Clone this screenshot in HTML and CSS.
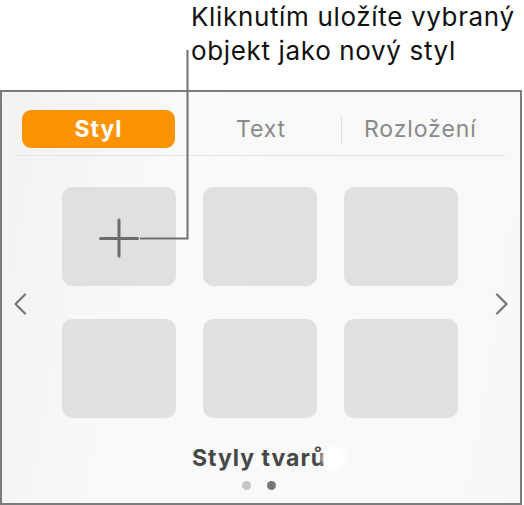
FILE: index.html
```html
<!DOCTYPE html>
<html lang="cs">
<head>
    <meta charset="UTF-8">
    <title>Styly tvarů</title>
    <link rel="stylesheet" href="styles.css">
</head>
<body>
    <div class="figure">
        <p class="callout">Kliknutím uložíte vybraný<br>objekt jako nový styl</p>

        <div class="panel">
            <div class="tabs">
                <div class="tab active"><span>Styl</span></div>
                <div class="tab">Text</div>
                <div class="tab divided">Rozložení</div>
            </div>
            <div class="rule"></div>

            <div class="browser">
                <svg class="chevron" width="14" height="22" viewBox="0 0 14 22">
                    <polyline points="12,1.5 2.5,11 12,20.5" fill="none" stroke="#767676" stroke-width="2.2" stroke-linecap="round" stroke-linejoin="round"/>
                </svg>
                <div class="tiles">
                    <div class="tile add">
                        <svg width="40" height="40" viewBox="0 0 40 40">
                            <path d="M1.5 20.5 H38.5 M20 2 V38" stroke="#6c6c6c" stroke-width="3" stroke-linecap="round"/>
                        </svg>
                    </div>
                    <div class="tile"></div>
                    <div class="tile"></div>
                    <div class="tile"></div>
                    <div class="tile"></div>
                    <div class="tile"></div>
                </div>
                <svg class="chevron right" width="14" height="22" viewBox="0 0 14 22">
                    <polyline points="2,1.5 11.5,11 2,20.5" fill="none" stroke="#767676" stroke-width="2.2" stroke-linecap="round" stroke-linejoin="round"/>
                </svg>
            </div>

            <div class="caption"><span class="caption-text">Styly tvarů</span><span class="glow"></span></div>
            <div class="dots">
                <span class="dot"></span>
                <span class="dot current"></span>
            </div>
        </div>

        <!-- leader line from the callout to the + tile -->
        <svg class="leader" width="524" height="505" viewBox="0 0 524 505">
            <polyline points="187.5,50 187.5,238.5 140,238.5" fill="none" stroke="#707070" stroke-width="2"/>
        </svg>
    </div>
</body>
</html>
```

FILE: styles.css
```css
body, html {
    margin: 0;
    padding: 0;
    background: #ffffff;
    font-family: Inter, Roboto, 'Liberation Sans', sans-serif;
}

.figure {
    position: relative;
    width: 524px;
    height: 505px;
    overflow: hidden;
}

.callout {
    margin: 0;
    padding-left: 191px;
    font-size: 26px;
    line-height: 34px;
    letter-spacing: 0.65px;
    color: #111111;
}

.panel {
    box-sizing: border-box;
    width: 522px;
    height: 415px;
    margin-top: 22px;
    border: 2px solid #7b7b7b;
    background: linear-gradient(100deg, #f1f3f3 0%, #f8f9f9 30%, #f8f8f8 100%);
    padding-top: 18px;
}

.tabs {
    display: flex;
    margin: 0 20px;
    height: 38px;
}

.tab {
    flex: 1;
    display: flex;
    align-items: center;
    justify-content: center;
    font-size: 23px;
    letter-spacing: 0.9px;
    color: #8a8a8a;
}

.tab.active {
    justify-content: flex-start;
}

.tab.active span {
    display: flex;
    align-items: center;
    justify-content: center;
    width: 153px;
    height: 38px;
    border-radius: 9px;
    background: #fd9303;
    color: #ffffff;
    font-weight: 700;
    letter-spacing: 1px;
}

.tab.divided {
    position: relative;
}

.tab.divided::before {
    content: '';
    position: absolute;
    left: 0;
    top: 6px;
    height: 27px;
    border-left: 1px solid #dedede;
}

.rule {
    height: 1px;
    margin: 7px 15px 0 13px;
    background: #e2e2e2;
}

.browser {
    display: flex;
    align-items: center;
    margin-top: 31px;
    padding-left: 11px;
}

.chevron {
    flex: none;
    margin-top: 2px;
}

.chevron.right {
    margin-left: 37px;
}

.tiles {
    display: grid;
    grid-template-columns: repeat(3, 114px);
    grid-auto-rows: 99px;
    column-gap: 27px;
    row-gap: 33px;
    margin-left: 35px;
}

.tile {
    border-radius: 10px;
    background: #e0e0e0;
}

.tile.add {
    display: flex;
    align-items: center;
    justify-content: center;
}

.tile.add svg {
    margin-top: 3px;
}

.caption {
    display: flex;
    justify-content: center;
    align-items: center;
    margin-top: 24px;
    height: 32px;
    padding-right: 4px;
}

.caption-text {
    font-size: 23px;
    font-weight: 700;
    letter-spacing: 1px;
    color: #474747;
}

.glow {
    width: 20px;
    height: 20px;
    margin-left: -2px;
    margin-right: -18px;
    border-radius: 50%;
    background: #ffffff;
    box-shadow: 0 0 4px 2px #ffffff;
}

.dots {
    display: flex;
    justify-content: center;
    gap: 16px;
    margin-top: 7px;
    padding-right: 4px;
}

.dot {
    width: 9px;
    height: 9px;
    border-radius: 50%;
    background: #c6c6c6;
}

.dot.current {
    background: #777777;
}

.leader {
    position: absolute;
    left: 0;
    top: 0;
    pointer-events: none;
}
```
